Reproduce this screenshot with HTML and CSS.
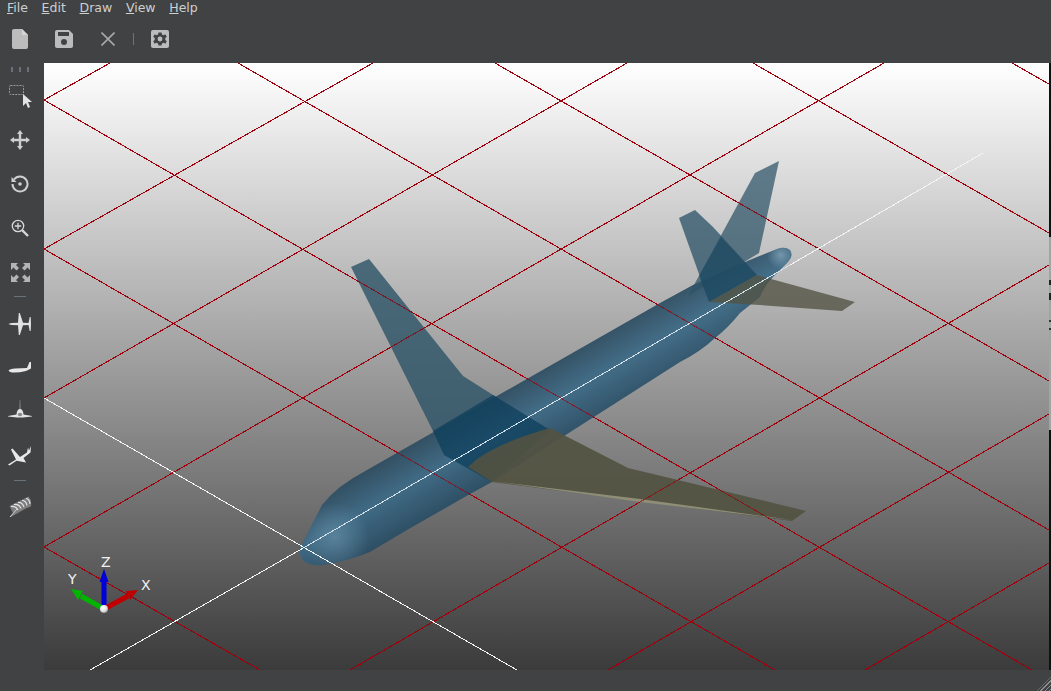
FILE: index.html
```html
<!DOCTYPE html>
<html lang="en">
<head>
  <meta charset="UTF-8">
  <title>Aircraft Viewer</title>
  <link rel="stylesheet" href="styles.css">
</head>
<body>
  <nav class="menubar">
    <span class="menu"><u>F</u>ile</span>
    <span class="menu"><u>E</u>dit</span>
    <span class="menu"><u>D</u>raw</span>
    <span class="menu"><u>V</u>iew</span>
    <span class="menu"><u>H</u>elp</span>
  </nav>

  <div class="toolbar">
    <svg class="tool file" width="16" height="20" viewBox="0 0 16 20"><path d="M2 0H10L16 6V18Q16 20 14 20H2Q0 20 0 18V2Q0 0 2 0Z" fill="#bcbcbc"/><path d="M10 0V6H16Z" fill="#d4d4d4"/></svg>
    <svg class="tool save" width="18" height="18" viewBox="0 0 18 18"><path d="M2 0H14L18 4V16Q18 18 16 18H2Q0 18 0 16V2Q0 0 2 0Z" fill="#bcbcbc"/><rect x="3" y="2" width="11" height="4" fill="#404244"/><circle cx="9" cy="12" r="3" fill="#404244"/></svg>
    <svg class="tool close" width="14" height="14" viewBox="0 0 14 14"><path d="M0.500 0.500L13.500 13.500M13.500 0.500L0.500 13.500" stroke="#a8a8a8" stroke-width="1.600" fill="none"/></svg>
    <span class="tool-sep"></span>
    <svg class="tool gear" width="18" height="18" viewBox="0 0 18 18"><rect width="18" height="18" rx="2" fill="#bcbcbc"/><path d="M7.500 2.500H10.500L11 4.500L12.600 5.200L14.300 4.200L15.800 6.700L14.300 8L14.300 10L15.800 11.300L14.300 13.800L12.600 12.800L11 13.500L10.500 15.500H7.500L7 13.500L5.400 12.800L3.700 13.800L2.200 11.300L3.700 10V8L2.200 6.700L3.700 4.200L5.400 5.200L7 4.500Z" fill="#404244"/><circle cx="9" cy="9" r="2.400" fill="#bcbcbc"/></svg>
  </div>

  <div class="main">
    <aside class="sidebar">
      <div class="grip"><i></i><i></i><i></i></div>
      <svg class="side-icon select" width="26" height="26" viewBox="0 0 26 26"><rect x="1.500" y="1.500" width="14" height="9" rx="1" fill="none" stroke="#999" stroke-dasharray="2 1"/><path d="M15 10V22L18 19L20 24L22 23L20 18H24Z" fill="#e4e4e4"/></svg>
      <svg class="side-icon move" width="20" height="20" viewBox="0 0 20 20"><path d="M10 0L13 4H11.200V8.800H16V7L20 10L16 13V11.200H11.200V16H13L10 20L7 16H8.800V11.200H4V13L0 10L4 7V8.800H8.800V4H7Z" fill="#cfcfcf"/></svg>
      <svg class="side-icon rotate" width="18" height="18" viewBox="0 0 18 18"><path d="M3 4.500A7.500 7.500 0 1 1 1.500 9" fill="none" stroke="#d0d0d0" stroke-width="2"/><path d="M0.500 2V7H5.500Z" fill="#d0d0d0"/><circle cx="9" cy="9" r="1.800" fill="#d0d0d0"/></svg>
      <svg class="side-icon zoom" width="18" height="18" viewBox="0 0 18 18"><circle cx="7" cy="7" r="5.700" fill="none" stroke="#d8d8d8" stroke-width="1.300"/><path d="M7 3.800V10.200M3.800 7H10.200" stroke="#d8d8d8" stroke-width="1.300"/><path d="M11 11L17 17" stroke="#d8d8d8" stroke-width="2.400"/></svg>
      <svg class="side-icon fit" width="19" height="19" viewBox="0 0 19 19"><path d="M0 0H7L5 2L8 5L5.500 7.500L2.500 4.500L0 7ZM19 0V7L16.500 4.500L13.500 7.500L11 5L14 2L12 0ZM0 19V12L2.500 14.500L5.500 11.500L8 14L5 17L7 19ZM19 19H12L14 17L11 14L13.500 11.500L16.500 14.500L19 12Z" fill="#b4b4b4"/></svg>
      <span class="side-sep first"></span>
      <svg class="side-icon plane-top" width="24" height="22" viewBox="0 0 24 22"><path d="M0.500 11Q2 9.800 10 9.800L10.800 0H11.800L15 9.800L20.500 10L21.700 4H22.700L23 11L22.700 18H21.700L20.500 12L15 12.200L11.800 22H10.800L10 12.200Q2 12.200 0.500 11Z" fill="#e2e2e2"/></svg>
      <svg class="side-icon plane-side" width="24" height="14" viewBox="0 0 24 14"><path d="M0.500 9.500Q2 8 7 7.500L19 7L21.500 1H23L23 7.500L18 10Q10 12 4 11.500Q1 11 0.500 9.500Z" fill="#e8e8e8"/></svg>
      <svg class="side-icon plane-front" width="24" height="20" viewBox="0 0 24 20"><path d="M11.700 0H12.300L12.600 9H11.400Z" fill="#8a8a8a"/><path d="M0 16L8.500 14.500Q9 9 12 9Q15 9 15.500 14.500L24 16V16.600L15 17.500H9L0 16.600Z" fill="#e4e4e4"/><ellipse cx="12" cy="14.500" rx="2.200" ry="1.800" fill="#8a8a8a"/></svg>
      <svg class="side-icon plane-iso" width="24" height="20" viewBox="0 0 24 20"><path d="M0 18.500L8 13.500L3 3.500L4.500 2.500L12 11L19 6.500L20 1.500L21 4.500L23 0L22.500 6.500L15.500 12L18 16.500L8.500 14.800L1.500 19.500Z" fill="#e8e8e8"/></svg>
      <span class="side-sep"></span>
      <svg class="side-icon mesh" width="23" height="22" viewBox="0 0 23 22"><path d="M0.500 10L19.500 0.500Q23 4 22 10.500Q15 13 9 17L1 21.500L4 17Z" fill="#7e7e7e"/><path d="M2 10.500Q7 10 9 14M5 8.500Q10 8 12 12.500M9 6.500Q13 6 15 11M13 4.500Q17 4.500 18 9.500M17 2.500Q20.500 3 21 8" stroke="#e4e4e4" stroke-width="1.200" fill="none"/><path d="M1 21L8 13" stroke="#cfcfcf" stroke-width="1"/></svg>
    </aside>

    <svg class="viewport" viewBox="44 63 1005 607" width="1005" height="607">
      <defs>
        <linearGradient id="sky" x1="0" y1="0" x2="0" y2="1">
          <stop offset="0" stop-color="#ffffff"/>
          <stop offset="1" stop-color="#3b3b3b"/>
        </linearGradient>
        <linearGradient id="hull" gradientUnits="userSpaceOnUse" x1="478" y1="394" x2="522" y2="470">
          <stop offset="0" stop-color="#2a4455"/>
          <stop offset="0.5" stop-color="#3d6a86"/>
          <stop offset="1" stop-color="#284a60"/>
        </linearGradient>
        <radialGradient id="nose" gradientUnits="userSpaceOnUse" cx="335" cy="537" r="34">
          <stop offset="0" stop-color="#648da6" stop-opacity="0.7"/>
          <stop offset="1" stop-color="#648da6" stop-opacity="0"/>
        </radialGradient>
        <radialGradient id="tailcone" gradientUnits="userSpaceOnUse" cx="781" cy="255" r="14">
          <stop offset="0" stop-color="#7fa3b8" stop-opacity="0.8"/>
          <stop offset="1" stop-color="#7fa3b8" stop-opacity="0"/>
        </radialGradient>
        <radialGradient id="ball" cx="0.400" cy="0.350" r="0.700">
          <stop offset="0" stop-color="#ffffff"/>
          <stop offset="0.600" stop-color="#e4e4e4"/>
          <stop offset="1" stop-color="#8c8c8c"/>
        </radialGradient>
        <path id="grid-lines" d="M44 100L110 63M44 249L373 63M44 398L627 63M44 547L884 63M350 670L1049 265M608 670L1049 414M865 670L1049 563M44 100L1032 670M44 249L775 670M44 547L260 670M238 63L1049 530M495 63L1049 381M753 63L1049 233M1012 63L1049 84"/>
        <path id="hull-shape" d="M300 548L322 505Q330 495 340 487Q352 478 367 470L660 303L693 285Q730 268 757 257L777 249Q785 246 790 250Q794 256 788 262L773 277Q765 285 760 297L740 313Q728 328 715 338Q700 352 680 362L492 482L470 494L407 530L370 552Q350 560 333 563Q315 568 305 562Q298 556 300 548Z"/>
      </defs>
      <rect x="44" y="63" width="1005" height="607" fill="url(#sky)"/>

      <use class="grid" href="#grid-lines" shape-rendering="crispEdges"/>

      <g class="plane">
        <path class="wing-blue" d="M351 267L369 259L463 376L493 395L550 430L492 482L444 455L433 431Z"/>
        <use class="hull" href="#hull-shape"/>
        <use class="nose-light" href="#hull-shape"/>
        <use class="tail-light" href="#hull-shape"/>
        <path class="wing-root" d="M433 431L444 455L492 482L550 430L493 395Z"/>
        <path class="wing-olive" d="M468 467Q490 445 550 428L628 468L806 511L792 521L492 482Z"/>
        <path class="wing-strip" d="M492 481L640 499L792 520L640 502Z"/>
        <path class="tail-blue" d="M679 218L695 210L713 227L757 275L709 302Z"/>
        <path class="fin-blue" d="M688 296L755 173L779 161L759 253Z"/>
        <path class="tail-overlap" d="M721 237L757 275L709 302L699 276Z"/>
        <path class="tail-olive" d="M709 302L757 275L855 302L842 311L760 305Z"/>
      </g>

      <use class="grid grid-over" href="#grid-lines" shape-rendering="crispEdges"/>

      <g shape-rendering="crispEdges">
        <path class="axis-white" d="M90 670L305 547M790 265L983 153M44 398L517 670"/>
        <path class="axis-dim" d="M305 547L790 265"/>
      </g>

      <g class="triad">
        <path d="M104 609V580" stroke="#0000d8" stroke-width="5"/>
        <path d="M99.500 582L104 569L108.500 582Z" fill="#0000d8"/>
        <path d="M104 609L81 596" stroke="#00b400" stroke-width="5"/>
        <path d="M83 591L71 589L78 600Z" fill="#00b400"/>
        <path d="M104 609L128 596" stroke="#c00000" stroke-width="5"/>
        <path d="M126 591L138 590L130 600Z" fill="#c00000"/>
        <circle cx="104" cy="609" r="4" fill="url(#ball)"/>
        <text x="101" y="567">Z</text>
        <text x="68" y="584">Y</text>
        <text x="141" y="590">X</text>
      </g>
    </svg>

    <div class="edge"></div>
  </div>

  <footer class="statusbar">
    <span class="sizegrip"></span>
  </footer>
</body>
</html>
```

FILE: styles.css
```css
/* Reset and base */
* {
  box-sizing: border-box;
  margin: 0;
  padding: 0;
}

body {
  width: 1051px;
  height: 691px;
  overflow: hidden;
  display: flex;
  flex-direction: column;
  background: #404244;
  font-family: 'DejaVu Sans', sans-serif;
  color: #cfcfcf;
}

/* Menu */
.menubar {
  height: 15px;
  display: flex;
  gap: 13.7px;
  padding-left: 7px;
  font-size: 12.5px;
  line-height: 15px;
}

/* Top toolbar */
.toolbar {
  height: 48px;
  display: flex;
  align-items: center;
  padding-left: 12px;
}

.tool.file { margin-right: 27px; }
.tool.save { margin-right: 28px; }
.tool.close { margin-right: 18px; }

.tool-sep {
  width: 1px;
  height: 12px;
  background: #6a7480;
  margin-right: 17px;
}

/* Main row */
.main {
  height: 607px;
  display: flex;
}

.sidebar {
  width: 44px;
  flex: none;
  display: flex;
  flex-direction: column;
  align-items: center;
  padding: 4px 4px 0 0;
}

.grip {
  display: flex;
  gap: 6px;
  margin-left: -1px;
  height: 5px;
}

.grip i {
  width: 2px;
  height: 5px;
  background: #6c7078;
}

.side-icon {
  display: block;
  flex: none;
}

.select { margin: 12px 0 0 2px; }
.move { margin-top: 20px; }
.rotate { margin-top: 25px; }
.zoom { margin-top: 26px; }
.fit { margin-top: 26px; }
.plane-top { margin-top: 16px; }
.plane-side { margin-top: 26px; }
.plane-front { margin-top: 25px; }
.plane-iso { margin-top: 26px; }
.mesh { margin-top: 15px; }

.side-sep {
  width: 12px;
  height: 1px;
  background: #687078;
  margin-top: 14px;
  flex: none;
}

/* 3D view */
.viewport {
  display: block;
  flex: none;
}

.grid {
  stroke: #a0000c;
  stroke-width: 1.1;
  fill: none;
}

.grid-over {
  opacity: 0.6;
}

.axis-white {
  stroke: #f4f4f4;
  stroke-width: 1;
  fill: none;
}

.axis-dim {
  stroke: #d4e0e8;
  stroke-width: 1;
  fill: none;
}

.wing-blue { fill: #2c5366; fill-opacity: 0.8; }
.hull { fill: url(#hull); fill-opacity: 0.94; }
.nose-light { fill: url(#nose); }
.tail-light { fill: url(#tailcone); }
.wing-root { fill: #0c3f5c; fill-opacity: 0.72; }
.wing-olive { fill: #525342; fill-opacity: 0.92; }
.wing-strip { fill: #8f8f78; }
.tail-blue { fill: #2c5366; fill-opacity: 0.76; }
.fin-blue { fill: #2c5366; fill-opacity: 0.72; }
.tail-overlap { fill: #0c3f5c; fill-opacity: 0.35; }
.tail-olive { fill: #525342; fill-opacity: 0.78; }

.triad text {
  font-family: 'DejaVu Sans', sans-serif;
  font-size: 14px;
  fill: #f2f2f2;
}

/* Right edge sliver */
.edge {
  width: 2px;
  flex: none;
  background: linear-gradient(#111 0, #111 174px, #a4a4a4 174px, #a4a4a4 217px, #222 217px, #222 222px, #a4a4a4 222px, #a4a4a4 230px, #222 230px, #222 237px, #a4a4a4 237px, #a4a4a4 257px, #333 257px, #333 259px, #a4a4a4 259px, #a4a4a4 265px, #333 265px, #333 267px, #a4a4a4 267px, #a4a4a4 367px, #111 367px);
}

/* Status bar */
.statusbar {
  height: 21px;
  display: flex;
  justify-content: flex-end;
  align-items: flex-end;
}

.sizegrip {
  width: 14px;
  height: 14px;
  background: repeating-linear-gradient(135deg, #8a8c8e 0 1px, #404244 1px 3px);
  clip-path: polygon(100% 0, 100% 100%, 0 100%);
}
```
